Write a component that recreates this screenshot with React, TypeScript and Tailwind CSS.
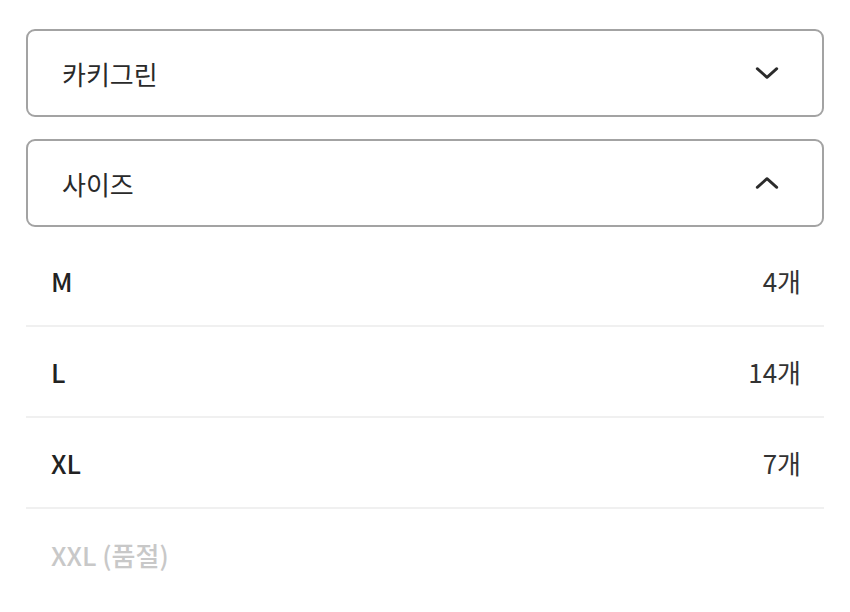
import React from 'react';

type SizeOption = { label: string; count?: number; soldOut?: boolean };

const sizes: SizeOption[] = [
  { label: 'M', count: 4 },
  { label: 'L', count: 14 },
  { label: 'XL', count: 7 },
  { label: 'XXL (품절)', soldOut: true },
];

const Chevron = ({ up }: { up?: boolean }) => (
  <svg className="h-[26px] w-[26px] text-[#2b2b2b]" viewBox="0 0 24 24" fill="none" stroke="currentColor" strokeWidth={2.6} strokeLinecap="round" strokeLinejoin="round">
    <path d={up ? 'M3 16l9-8 9 8' : 'M3 8l9 8 9-8'} />
  </svg>
);

const SelectBox = ({ label, open }: { label: string; open?: boolean }) => (
  <button className="flex h-[88px] w-full items-center justify-between rounded-[9px] border-2 border-[#a3a3a3] bg-white pl-[34px] pr-[42px] text-left">
    <span className="text-[26px] text-[#2a2a2a]">{label}</span>
    <Chevron up={open} />
  </button>
);

const App = () => {
  return (
    <div
      className="min-h-[612px] bg-white px-[26px] pt-[29px]"
      style={{ fontFamily: '"Noto Sans CJK KR", "Noto Sans", sans-serif' }}
    >
      <div className="flex flex-col gap-[22px]">
        <SelectBox label="카키그린" />
        <SelectBox label="사이즈" open />
      </div>

      <ul className="mt-[9px]">
        {sizes.map((s, i) => (
          <li
            key={s.label}
            className={`flex h-[91px] items-center justify-between pl-[25px] pr-[23px] ${
              i < sizes.length - 1 ? 'border-b-2 border-[#f0f0f0]' : ''
            }`}
          >
            <span className={`text-[26px] font-medium ${s.soldOut ? 'text-[#c8c8c8]' : 'text-[#222]'}`}>
              {s.label}
            </span>
            {s.count !== undefined && (
              <span className="text-[26px] text-[#333]">{s.count}개</span>
            )}
          </li>
        ))}
      </ul>
    </div>
  );
};

export default App;
